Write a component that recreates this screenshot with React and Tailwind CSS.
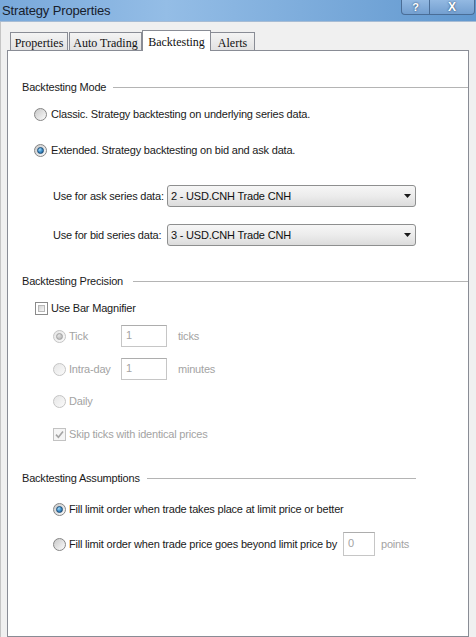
import React from "react";

function Radio({ checked, disabled }) {
  return (
    <div
      className={
        disabled
          ? "flex h-[13px] w-[13px] shrink-0 items-center justify-center rounded-full border border-[#c4c4c4] bg-linear-to-br from-[#e6e6e6] to-[#fafafa]"
          : "flex h-[13px] w-[13px] shrink-0 items-center justify-center rounded-full border border-[#858585] bg-linear-to-br from-[#c8c8c8] to-[#fcfcfc]"
      }
    >
      {checked && (
        <div
          className={
            disabled
              ? "h-[7px] w-[7px] rounded-full border border-[#a2a2a2] bg-radial-[at_35%_30%] from-[#e4e4e4] to-[#ababab]"
              : "h-[7px] w-[7px] rounded-full border border-[#1c4a74] bg-radial-[at_35%_30%] from-[#a6dbf8] via-[#3f91cc] to-[#1a5688]"
          }
        />
      )}
    </div>
  );
}

function Checkbox({ checked, disabled }) {
  if (disabled) {
    return (
      <div className="flex h-[13px] w-[13px] shrink-0 items-center justify-center border border-[#c2c2c2] bg-[#f5f5f5]">
        {checked && (
          <svg width="9" height="9" viewBox="0 0 9 9">
            <path d="M1 4.6 L3.4 7.2 L8 1.4" fill="none" stroke="#a4a4a4" strokeWidth="1.6" />
          </svg>
        )}
      </div>
    );
  }
  return (
    <div className="flex h-[13px] w-[13px] shrink-0 border border-[#8a8a8a] bg-white p-[2px]">
      <div className="h-full w-full border border-[#b8b8b8] bg-linear-to-br from-[#d4d4d4] to-[#f6f6f6]" />
    </div>
  );
}

function Select({ value }) {
  return (
    <div className="flex h-[22px] w-[249px] items-center justify-between rounded-[3px] border border-[#8e8f8f] bg-linear-to-b from-[#f6f6f6] via-[#ececec] to-[#dcdcdc] pl-[3px] pr-[4px] text-[#111]">
      <span>{value}</span>
      <svg width="7" height="4" viewBox="0 0 7 4">
        <polygon points="0,0 7,0 3.5,4" fill="#1a1a1a" />
      </svg>
    </div>
  );
}

export default function App() {
  return (
    <div className="h-[637px] w-[476px] overflow-hidden bg-[#f0f0f0] [font-family:'Liberation_Sans',Arial,sans-serif] text-[11px] tracking-[-0.2px] text-[#1a1a1a]">
      {/* Title bar */}
      <div className="flex h-[21px] items-start justify-between bg-linear-to-r from-[#78a8da] via-[#94bde6] via-35% to-[#6198cf] pr-[1px]">
        <span className="pl-[2px] pt-[1px] text-[13px] tracking-[-0.15px] text-[#17202c]">
          Strategy Properties
        </span>
        <div className="flex h-[15px]">
          <div className="flex w-[29px] items-center justify-center rounded-bl-[4px] border border-t-0 border-[#4a6d96] bg-linear-to-b from-[#93b9e2] to-[#739fd0] text-[11px] font-bold leading-none text-white [text-shadow:0_0_2px_#1d3a5c]">
            ?
          </div>
          <div className="flex w-[45px] items-center justify-center rounded-br-[4px] border border-l-0 border-t-0 border-[#4a6d96] bg-linear-to-b from-[#93b9e2] to-[#739fd0] text-[12px] font-bold leading-none text-white [text-shadow:0_0_2px_#1d3a5c]">
            X
          </div>
        </div>
      </div>
      <div className="h-px bg-[#a7bcd4]" />

      {/* Body */}
      <div className="flex h-[615px] flex-col border-l border-[#c4c4c4]">
        {/* Tabs */}
        <div className="flex h-[28px] items-end pl-[9px] pt-[8px] [font-family:'Liberation_Serif','Times_New_Roman',serif] text-[12px] tracking-normal text-[#111]">
          <div className="flex h-[18px] w-[58px] items-center justify-center border border-b-0 border-[#898c95] bg-linear-to-b from-[#f4f4f4] to-[#e2e2e2] pt-[2px]">
            Properties
          </div>
          <div className="ml-px flex h-[18px] w-[73px] items-center justify-center border border-b-0 border-[#898c95] bg-linear-to-b from-[#f4f4f4] to-[#e2e2e2] pt-[2px]">
            Auto Trading
          </div>
          <div className="relative z-10 mb-[-1px] flex h-[21px] w-[69px] items-start justify-center border border-b-0 border-[#898c95] bg-white pt-[2px]">
            Backtesting
          </div>
          <div className="flex h-[18px] w-[44px] items-center justify-center border border-b-0 border-l-0 border-[#898c95] bg-linear-to-b from-[#f4f4f4] to-[#e2e2e2] pt-[2px]">
            Alerts
          </div>
        </div>

        {/* Panel */}
        <div className="ml-[6px] flex h-[600px] w-[462px] flex-col border border-[#898c95] bg-white">
          <div className="mt-[26px] flex h-[20px] items-center pl-[14px]">
            <span className="w-[91px] shrink-0">Backtesting Mode</span>
            <div className="h-px flex-1 bg-[#b4b4b4]" />
          </div>

          <div className="mt-[7px] flex h-[20px] items-center gap-[4px] pl-[26px]">
            <Radio />
            <span>Classic. Strategy backtesting on underlying series data.</span>
          </div>

          <div className="mt-[16px] flex h-[20px] items-center gap-[4px] pl-[26px]">
            <Radio checked />
            <span>Extended. Strategy backtesting on bid and ask data.</span>
          </div>

          <div className="mt-[25px] flex h-[22px] items-center pl-[45px]">
            <span className="w-[114px] shrink-0">Use for ask series data:</span>
            <Select value="2 - USD.CNH Trade CNH" />
          </div>

          <div className="mt-[17px] flex h-[22px] items-center pl-[45px]">
            <span className="w-[114px] shrink-0">Use for bid series data:</span>
            <Select value="3 - USD.CNH Trade CNH" />
          </div>

          <div className="mt-[25px] flex h-[20px] items-center pl-[14px]">
            <span className="w-[111px] shrink-0">Backtesting Precision</span>
            <div className="h-px flex-1 bg-[#b4b4b4]" />
          </div>

          <div className="mt-[7px] flex h-[20px] items-center gap-[3px] pl-[27px]">
            <Checkbox />
            <span>Use Bar Magnifier</span>
          </div>

          <div className="mt-[7px] flex h-[22px] items-center pl-[45px] text-[#a3a3a3]">
            <div className="flex w-[68px] shrink-0 items-center gap-[3px]">
              <Radio checked disabled />
              <span>Tick</span>
            </div>
            <div className="h-[22px] w-[46px] border border-[#c6c6c6] border-t-[#adadad] bg-white pl-[4px] pt-[2px] leading-[14px]">
              1
            </div>
            <span className="ml-[11px]">ticks</span>
          </div>

          <div className="mt-[11px] flex h-[22px] items-center pl-[45px] text-[#a3a3a3]">
            <div className="flex w-[68px] shrink-0 items-center gap-[3px]">
              <Radio disabled />
              <span>Intra-day</span>
            </div>
            <div className="h-[22px] w-[46px] border border-[#c6c6c6] border-t-[#adadad] bg-white pl-[4px] pt-[2px] leading-[14px]">
              1
            </div>
            <span className="ml-[11px]">minutes</span>
          </div>

          <div className="mt-[11px] flex h-[20px] items-center gap-[3px] pl-[45px] text-[#a3a3a3]">
            <Radio disabled />
            <span>Daily</span>
          </div>

          <div className="mt-[13px] flex h-[20px] items-center gap-[3px] pl-[45px] text-[#a3a3a3]">
            <Checkbox checked disabled />
            <span>Skip ticks with identical prices</span>
          </div>

          <div className="mt-[24px] flex h-[20px] items-center pl-[14px]">
            <span className="w-[125px] shrink-0">Backtesting Assumptions</span>
            <div className="h-px w-[269px] bg-[#b4b4b4]" />
          </div>

          <div className="mt-[11px] flex h-[20px] items-center gap-[3px] pl-[45px]">
            <Radio checked />
            <span>Fill limit order when trade takes place at limit price or better</span>
          </div>

          <div className="mt-[13px] flex h-[24px] items-center pl-[45px]">
            <Radio />
            <span className="ml-[3px] w-[274px] shrink-0">
              Fill limit order when trade price goes beyond limit price by
            </span>
            <div className="h-[24px] w-[32px] border border-[#c6c6c6] border-t-[#adadad] bg-white pl-[4px] pt-[3px] leading-[14px] text-[#a3a3a3]">
              0
            </div>
            <span className="ml-[6px] text-[#a3a3a3]">points</span>
          </div>
        </div>
      </div>
    </div>
  );
}
